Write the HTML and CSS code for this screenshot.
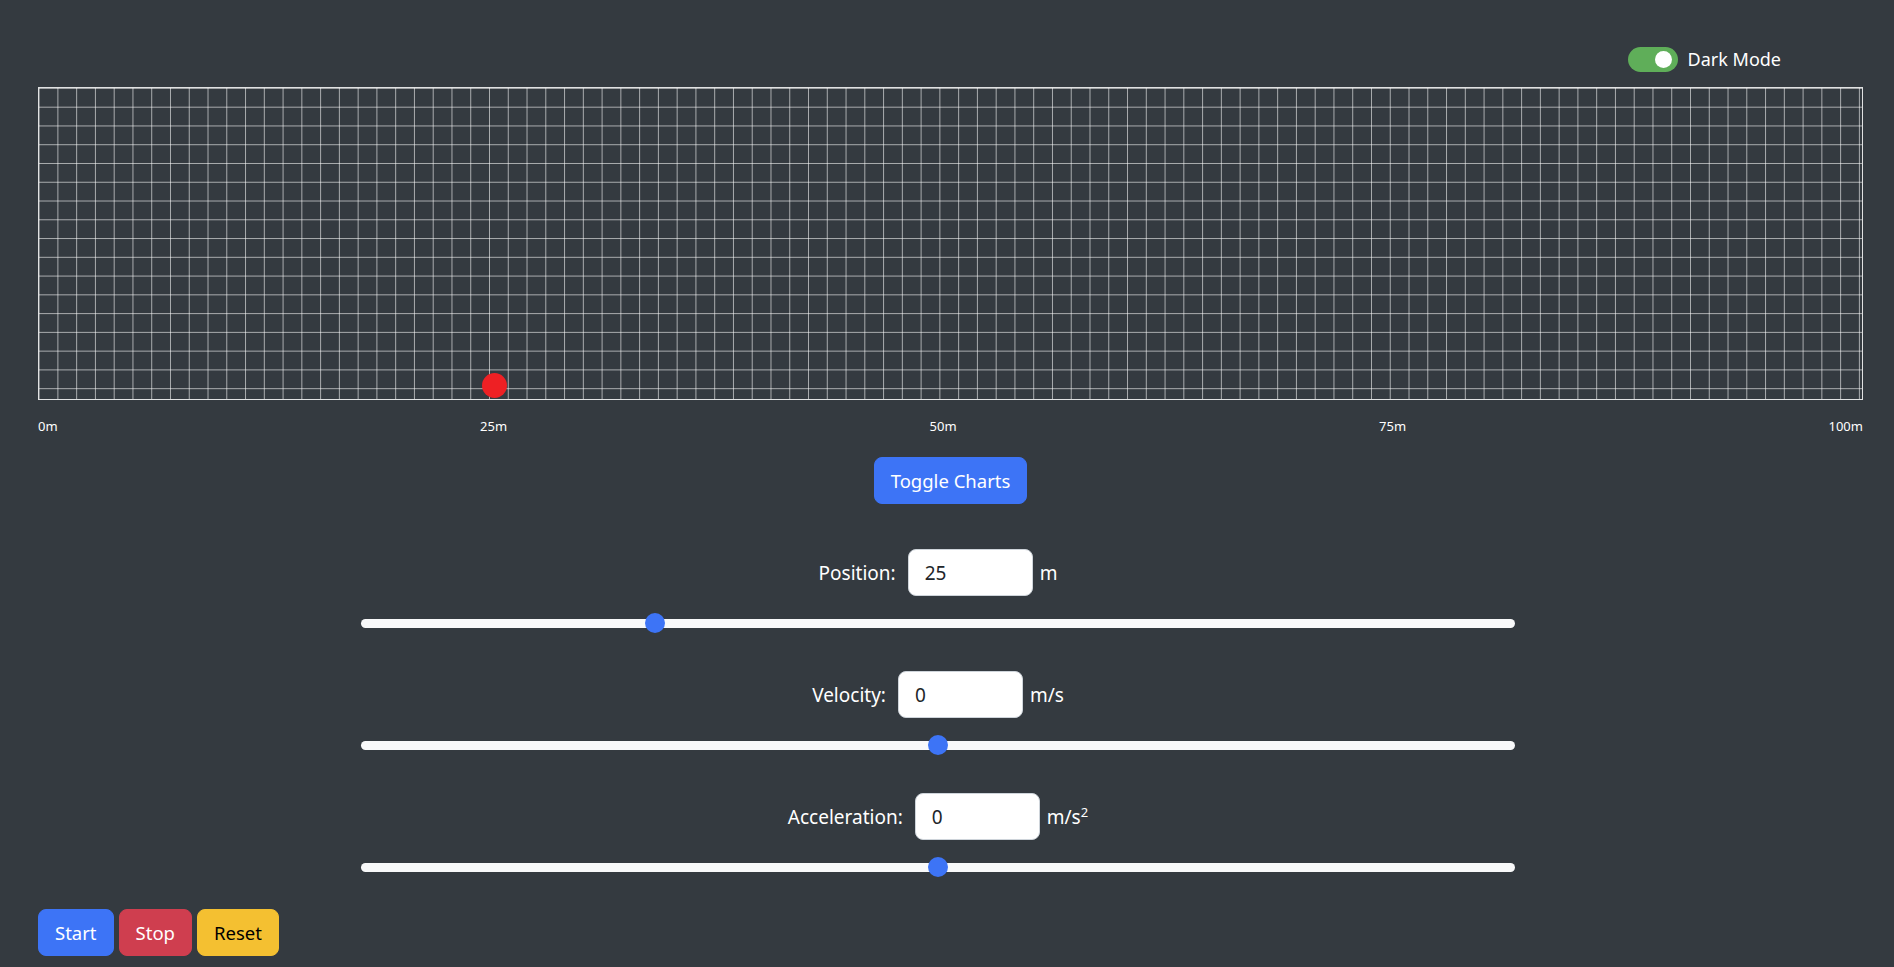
FILE: index.html
```html
<!DOCTYPE html>
<html lang="en">
<head>
<meta charset="utf-8">
<title>Motion Simulator</title>
<link rel="stylesheet" href="styles.css">
</head>
<body>
<div class="page">
  <div class="topbar">
    <label class="switch-label">
      <span class="switch"><span class="knob"></span></span>
      <span class="switch-text">Dark Mode</span>
    </label>
  </div>

  <div class="track">
    <div class="ball" style="left: 25%"></div>
  </div>

  <div class="ticks">
    <span>0m</span><span>25m</span><span>50m</span><span>75m</span><span>100m</span>
  </div>

  <div class="center-row">
    <button class="btn btn-primary">Toggle Charts</button>
  </div>

  <div class="controls">
    <div class="control">
      <div class="control-head">
        <label class="control-label">Position:</label>
        <input class="num" type="text" value="25">
        <span class="unit">m</span>
      </div>
      <input class="slider" type="range" min="0" max="100" value="25">
    </div>
    <div class="control">
      <div class="control-head">
        <label class="control-label">Velocity:</label>
        <input class="num" type="text" value="0">
        <span class="unit">m/s</span>
      </div>
      <input class="slider" type="range" min="-10" max="10" value="0">
    </div>
    <div class="control">
      <div class="control-head">
        <label class="control-label">Acceleration:</label>
        <input class="num" type="text" value="0">
        <span class="unit">m/s<sup>2</sup></span>
      </div>
      <input class="slider" type="range" min="-10" max="10" value="0">
    </div>
  </div>

  <div class="actions">
    <button class="btn btn-primary">Start</button>
    <button class="btn btn-danger">Stop</button>
    <button class="btn btn-warning">Reset</button>
  </div>
</div>
</body>
</html>
```

FILE: styles.css
```css
* { box-sizing: border-box; }

html, body {
  margin: 0;
  padding: 0;
  background: #343a40;
  color: #ffffff;
  font-family: "Noto Sans", "Open Sans", "Liberation Sans", sans-serif;
  font-size: 19px;
}

.page {
  padding: 0 31px 0 38px;
  overflow: hidden;
  height: 967px;
}

.topbar {
  margin-top: 44px;
  height: 30px;
  margin-bottom: 13px;
  display: flex;
  justify-content: flex-end;
  padding-right: 82px;
}

.switch-label {
  display: flex;
  align-items: center;
  gap: 10px;
  font-size: 18px;
}

.switch {
  position: relative;
  width: 50px;
  height: 25px;
  border-radius: 13px;
  background: #5fae59;
  display: inline-block;
}

.knob {
  position: absolute;
  right: 6px;
  top: 4px;
  width: 17px;
  height: 17px;
  border-radius: 50%;
  background: #ffffff;
}

.track {
  position: relative;
  height: 313px;
  border: 1px solid #e0e1e2;
  background-image:
    linear-gradient(to right, rgba(255,255,255,0.58) 1px, transparent 1px),
    linear-gradient(to bottom, rgba(255,255,255,0.58) 1px, transparent 1px);
  background-size: 18.77px 18.77px;
  background-position: 18.4px 18.7px;
}

.ball {
  position: absolute;
  bottom: 1px;
  width: 25px;
  height: 25px;
  margin-left: -13px;
  border-radius: 50%;
  background: #ee2024;
}

.ticks {
  margin-top: 16px;
  display: flex;
  justify-content: space-between;
  font-size: 13px;
  line-height: 20px;
}

.center-row {
  margin-top: 21px;
  display: flex;
  justify-content: center;
}

.btn {
  font-family: inherit;
  font-size: 18.5px;
  line-height: 29px;
  padding: 8px 16px;
  border: 1px solid transparent;
  border-radius: 8px;
  color: #ffffff;
  cursor: pointer;
}

.btn-primary { background: #3d74f6; border-color: #3d74f6; }
.btn-danger { background: #cf3e4f; border-color: #cf3e4f; }
.btn-warning { background: #f4c031; border-color: #f4c031; color: #000000; }

.controls {
  margin-top: 45px;
  width: 1154px;
  margin-left: 323px;
  display: flex;
  flex-direction: column;
  gap: 38px;
}

.control {
  display: flex;
  flex-direction: column;
}

.control-head {
  display: flex;
  justify-content: center;
  align-items: center;
  height: 47px;
}

.control-label { margin-right: 12px; }

.num {
  width: 125px;
  height: 47px;
  padding: 8px 16px;
  font-family: inherit;
  font-size: 19px;
  color: #212529;
  background: #ffffff;
  border: 1px solid #ced4da;
  border-radius: 8px;
}

.unit { margin-left: 7px; }
.unit sup { font-size: 13px; line-height: 0; }

.slider {
  -webkit-appearance: none;
  appearance: none;
  margin: 17px 0 0 0;
  width: 100%;
  height: 20px;
  background: transparent;
}

.slider::-webkit-slider-runnable-track {
  height: 9px;
  background: #f8f9fa;
  border-radius: 5px;
}

.slider::-webkit-slider-thumb {
  -webkit-appearance: none;
  appearance: none;
  width: 20px;
  height: 20px;
  margin-top: -5.5px;
  border-radius: 50%;
  background: #3d74f6;
  border: none;
}

.actions {
  margin-top: 32px;
  display: flex;
  gap: 5px;
}
```
